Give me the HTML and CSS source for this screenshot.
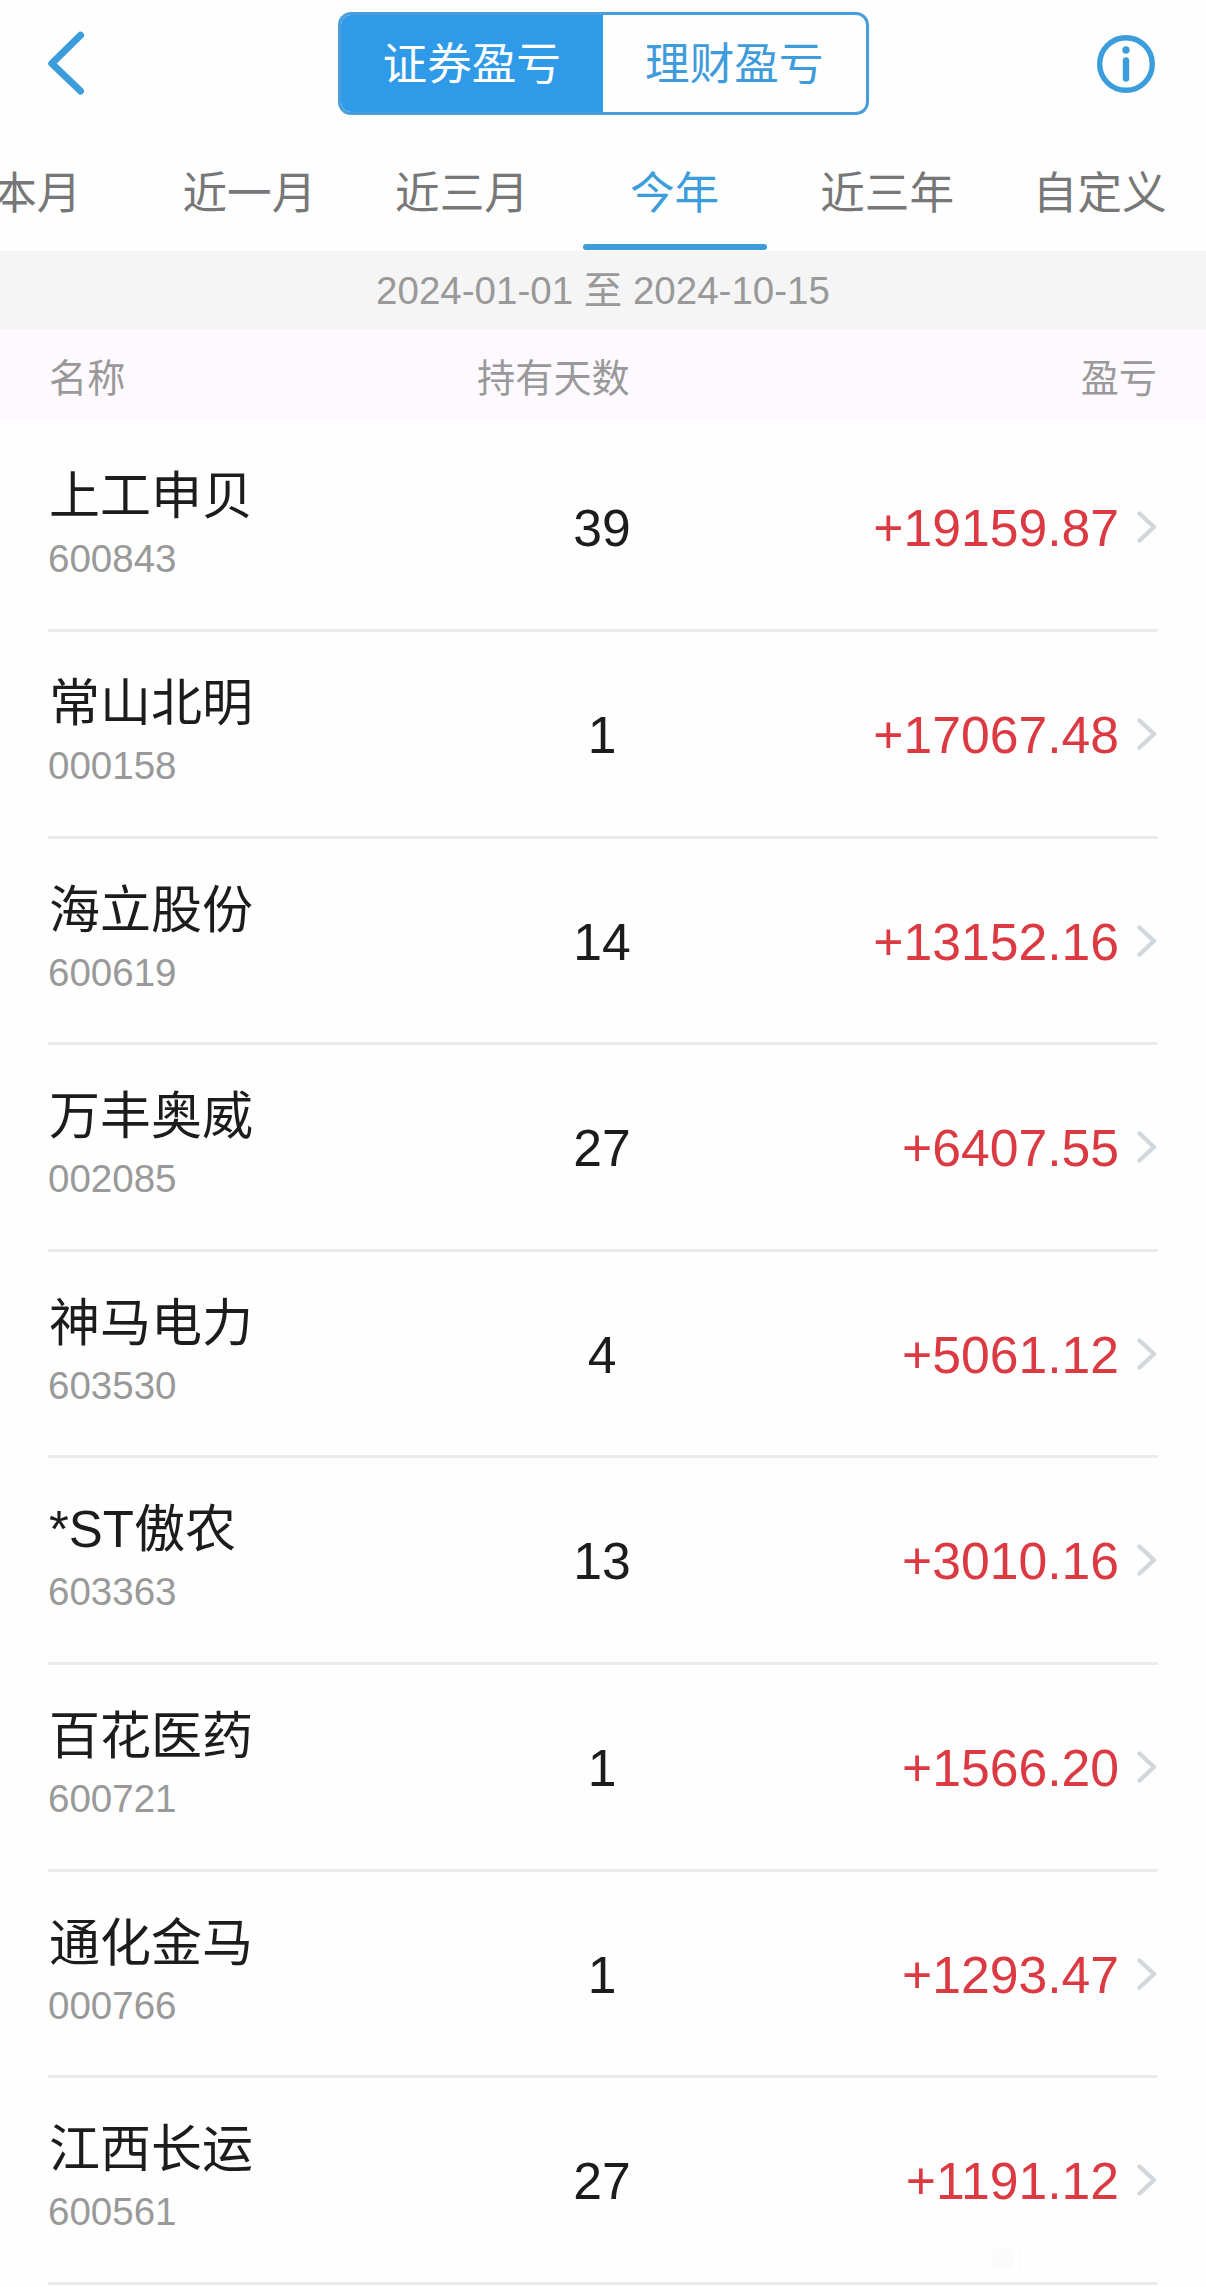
FILE: index.html
```html
<!DOCTYPE html>
<html lang="zh-CN">
<head>
<meta charset="utf-8">
<title>证券盈亏</title>
<link rel="stylesheet" href="styles.css">
</head>
<body>
<svg class="defs" width="0" height="0"><symbol id="chev" viewBox="0 0 20 34"><path d="M2.5 3.5 17 17 2.5 30.5" fill="none" stroke="#d2d7dc" stroke-width="4.4" stroke-linecap="round" stroke-linejoin="round"/></symbol></svg>
<header class="topbar">
  <svg class="back" viewBox="0 0 40 68"><path d="M34.5 5.2 5.8 33.5 34.5 61" fill="none" stroke="#3b9ddb" stroke-width="7" stroke-linecap="round" stroke-linejoin="round"/></svg>
  <nav class="segment"><span class="seg on">证券盈亏</span><span class="seg">理财盈亏</span></nav>
  <svg class="info" viewBox="0 0 60 60"><circle cx="30" cy="30" r="26.3" fill="none" stroke="#3b9ddb" stroke-width="5.4"/><circle cx="30" cy="16" r="3.7" fill="#3b9ddb"/><path d="M30 26.5V44.5" stroke="#3b9ddb" stroke-width="6.4" stroke-linecap="round"/></svg>
</header>
<nav class="tabs">
  <span class="tab">本月</span><span class="tab">近一月</span><span class="tab">近三月</span><span class="tab active">今年</span><span class="tab">近三年</span><span class="tab">自定义</span>
</nav>
<div class="range">2024-01-01 至 2024-10-15</div>
<div class="head"><span>名称</span><span class="head-days">持有天数</span><span class="head-pl">盈亏</span></div>
<main class="list">
  <div class="row"><div class="stock"><div class="name">上工申贝</div><div class="code">600843</div></div><div class="days">39</div><div class="amount">+19159.87</div><svg class="chev"><use href="#chev"/></svg></div>
  <div class="row"><div class="stock"><div class="name">常山北明</div><div class="code">000158</div></div><div class="days">1</div><div class="amount">+17067.48</div><svg class="chev"><use href="#chev"/></svg></div>
  <div class="row"><div class="stock"><div class="name">海立股份</div><div class="code">600619</div></div><div class="days">14</div><div class="amount">+13152.16</div><svg class="chev"><use href="#chev"/></svg></div>
  <div class="row"><div class="stock"><div class="name">万丰奥威</div><div class="code">002085</div></div><div class="days">27</div><div class="amount">+6407.55</div><svg class="chev"><use href="#chev"/></svg></div>
  <div class="row"><div class="stock"><div class="name">神马电力</div><div class="code">603530</div></div><div class="days">4</div><div class="amount">+5061.12</div><svg class="chev"><use href="#chev"/></svg></div>
  <div class="row"><div class="stock"><div class="name">*ST傲农</div><div class="code">603363</div></div><div class="days">13</div><div class="amount">+3010.16</div><svg class="chev"><use href="#chev"/></svg></div>
  <div class="row"><div class="stock"><div class="name">百花医药</div><div class="code">600721</div></div><div class="days">1</div><div class="amount">+1566.20</div><svg class="chev"><use href="#chev"/></svg></div>
  <div class="row"><div class="stock"><div class="name">通化金马</div><div class="code">000766</div></div><div class="days">1</div><div class="amount">+1293.47</div><svg class="chev"><use href="#chev"/></svg></div>
  <div class="row"><div class="stock"><div class="name">江西长运</div><div class="code">600561</div></div><div class="days">27</div><div class="amount">+1191.12</div><svg class="chev"><use href="#chev"/></svg>
    <svg class="mark" viewBox="0 0 36 36"><rect x="1.5" y="1.5" width="33" height="33" rx="6" fill="none" stroke="#fbfbfb" stroke-width="2"/><rect x="7" y="7" width="22" height="22" rx="6" fill="#fbfbfb"/></svg></div>
</main>
</body>
</html>
```
FILE: styles.css
```css
* { box-sizing: border-box; }
body {
  margin: 0;
  width: 1206px;
  height: 2287px;
  overflow: hidden;
  background: #fefefe;
  color: #1c1c1c;
  font-family: "Liberation Sans", "Noto Sans CJK SC", sans-serif;
}
.defs { display: block; }
.topbar {
  display: flex;
  justify-content: space-between;
  align-items: center;
  height: 127px;
  padding: 0 50px 0 46px;
}
.back { width: 40px; height: 68px; }
.segment {
  display: flex;
  width: 531px;
  height: 103px;
  margin-left: 24px;
  border: 3px solid #4a9ddb;
  border-radius: 13px;
  overflow: hidden;
}
.seg {
  flex: 1;
  line-height: 100px;
  text-align: center;
  font-size: 44.6px;
  color: #3f9cdc;
}
.seg.on { background: #2f9be8; color: #fff; }
.info { width: 60px; height: 60px; }
.tabs {
  display: grid;
  grid-template-columns: repeat(6, 212.6px);
  height: 124px;
  margin-left: -69.5px;
}
.tab {
  display: flex;
  flex-direction: column;
  align-items: center;
  height: 124px;
  line-height: 133px;
  font-size: 44.6px;
  color: #777;
}
.tab.active { color: #3b9ddb; }
.tab.active::after {
  content: "";
  flex: none;
  width: 184px;
  height: 6px;
  margin-top: -16px;
  border-radius: 3px;
  background: #3b9ddb;
}
.range {
  height: 78px;
  line-height: 80px;
  background: #f5f5f5;
  color: #999;
  font-size: 38.5px;
  text-align: center;
}
.head {
  display: grid;
  grid-template-columns: 428px 160px 1fr;
  height: 93px;
  padding: 0 49px;
  background: #fdf9ff;
  color: #999;
  font-size: 38.2px;
  line-height: 99px;
}
.head-days { white-space: nowrap; }
.head-pl { text-align: right; }
.list { padding: 3.4px 48px 0; }
.row {
  position: relative;
  display: grid;
  grid-template-columns: 454px 200px 1fr 38px;
  height: 206.6px;
  border-bottom: 3px solid #ebebeb;
}
.stock { padding-top: 36px; }
.name { height: 72px; line-height: 72px; padding-left: 1px; font-size: 51px; white-space: nowrap; }
.code { height: 52px; line-height: 52px; font-size: 38.5px; color: #999; }
.days, .amount { padding-top: 73px; line-height: 60px; font-size: 51.7px; }
.days { text-align: center; }
.amount { padding-right: 1px; text-align: right; color: #dc3a42; }
.chev { width: 20px; height: 34px; margin: 85px 0 0 17px; }
.mark { position: absolute; left: 937px; bottom: 6px; width: 36px; height: 36px; }
```
